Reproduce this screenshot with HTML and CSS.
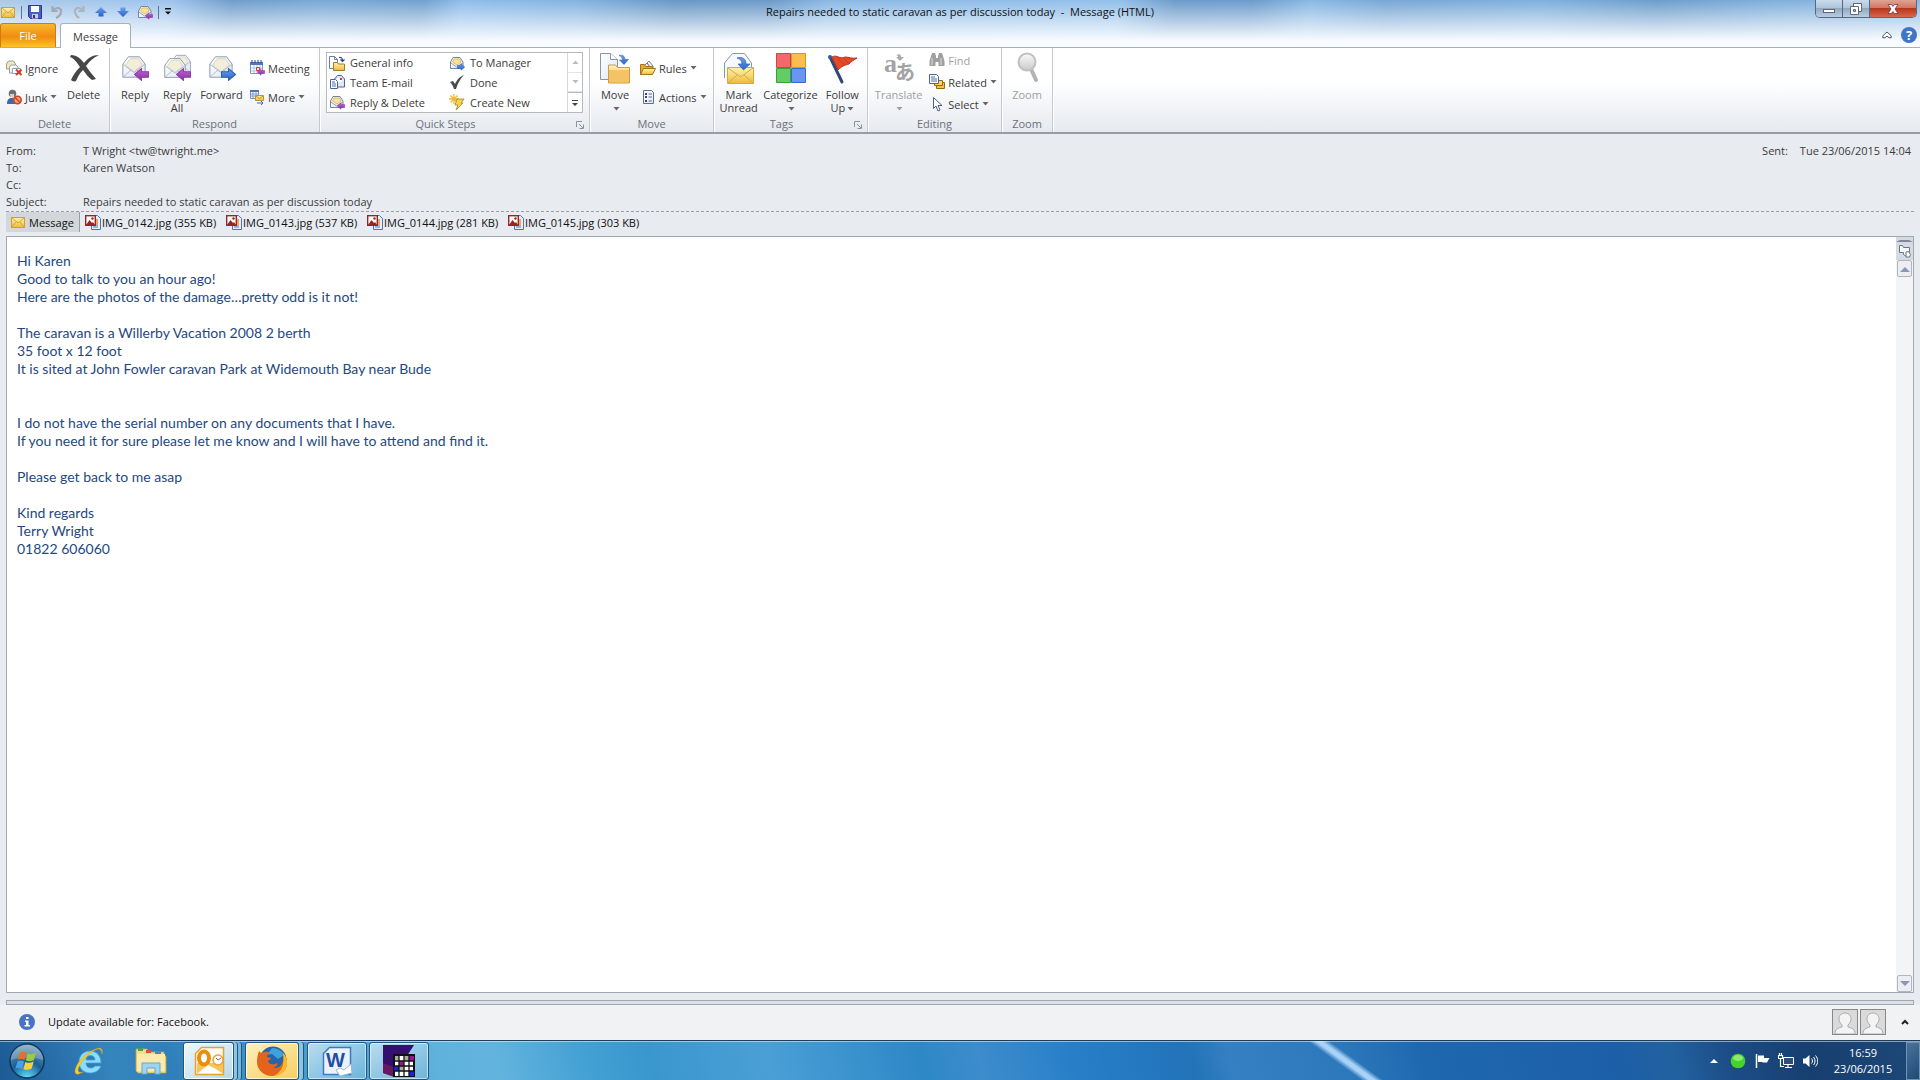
FILE: index.html
```html
<!DOCTYPE html>
<html lang="en">
<head>
    <meta charset="UTF-8">
    <meta name="viewport" content="width=device-width, initial-scale=1.0">
    <title>Repairs needed to static caravan as per discussion today - Message (HTML)</title>
    <link rel="stylesheet" href="styles.css">
</head>
<body>

    <!-- Shared icons -->
    <svg class="defs" aria-hidden="true">
        <defs>
            <linearGradient id="gold" x1="0" y1="0" x2="0" y2="1"><stop offset="0" stop-color="#fff3b0"/><stop offset="1" stop-color="#eebb3c"/></linearGradient>
            <linearGradient id="paper" x1="0" y1="0" x2="1" y2="1"><stop offset="0" stop-color="#ffffff"/><stop offset="1" stop-color="#dfe8f3"/></linearGradient>
            <linearGradient id="purple" x1="0" y1="0" x2="0" y2="1"><stop offset="0" stop-color="#c06ad0"/><stop offset="1" stop-color="#8a2ba6"/></linearGradient>
            <linearGradient id="blue" x1="0" y1="0" x2="0" y2="1"><stop offset="0" stop-color="#6ea0ee"/><stop offset="1" stop-color="#2a5fc8"/></linearGradient>
            <linearGradient id="grey" x1="0" y1="0" x2="0" y2="1"><stop offset="0" stop-color="#fafafa"/><stop offset="1" stop-color="#c9c9c9"/></linearGradient>
            <symbol id="mail" viewBox="0 0 16 16">
                <rect x="1.500" y="3.500" width="13" height="10" fill="url(#gold)" stroke="#c9a03c"/>
                <path d="M2 4l6 5 6-5M2 13l4-5M14 13l-4-5" fill="none" stroke="#d3a440"/>
            </symbol>
            <symbol id="open-mail" viewBox="0 0 28 28">
                <path d="M2 11L8 3h12l6 8v14H2z" fill="url(#paper)" stroke="#8794ab"/>
                <path d="M5 12l5-7h9l4 7-9 7z" fill="#f3eed9" stroke="#d8d4c2"/>
                <path d="M2 11l12 9 12-9M2 25l9-8M26 25l-9-8" fill="none" stroke="#a9b6ca"/>
            </symbol>
            <symbol id="arrow-left" viewBox="0 0 14 12">
                <path d="M.5 6L7 .5v3h6.500v5H7v3z" fill="url(#purple)" stroke="#8f3ea6"/>
            </symbol>
            <symbol id="arrow-right" viewBox="0 0 14 12">
                <path d="M13.500 6L7 .5v3H.5v5H7v3z" fill="url(#blue)" stroke="#3260ae"/>
            </symbol>
            <symbol id="reply" viewBox="0 0 28 28">
                <use href="#open-mail" width="26" height="26"/>
                <use href="#arrow-left" x="13" y="14" width="15" height="13"/>
            </symbol>
            <symbol id="reply-small" viewBox="0 0 16 16">
                <path d="M1.500 7L4 2.500h7L14 7v6.500H1.500z" fill="url(#paper)" stroke="#74869f"/>
                <path d="M3.500 7L5 4h5.500L12 7l-4 3z" fill="#fbe39c" stroke="#dfbb62"/>
                <path d="M2 8l5.500 4L14 8" fill="none" stroke="#8f9fb6"/>
                <use href="#arrow-left" x="8" y="8" width="8" height="8"/>
            </symbol>
            <symbol id="forward-small" viewBox="0 0 16 16">
                <path d="M1.500 7L4 2.500h7L14 7v6.500H1.500z" fill="url(#paper)" stroke="#74869f"/>
                <path d="M3.500 7L5 4h5.500L12 7l-4 3z" fill="#fbe39c" stroke="#dfbb62"/>
                <path d="M2 8l5.500 4L14 8" fill="none" stroke="#8f9fb6"/>
                <use href="#arrow-right" x="8" y="8" width="8" height="8"/>
            </symbol>
            <symbol id="move" viewBox="0 0 32 32">
                <path d="M1.500 1.500h10l7 6v20h-17z" fill="url(#paper)" stroke="#8795ad"/>
                <path d="M11.500 1.500v6h7" fill="#fff" stroke="#8795ad"/>
                <path d="M9.500 31V13h7l2 2.500h12V31z" fill="url(#gold)" stroke="#d29a3c"/>
                <path d="M10 18h20v12.500H10z" fill="#f4c367"/>
                <path d="M20 3.500c4-1 6 1 6 4h3.500L25 12.500 20.500 8h3c0-2-1-3.500-3.500-4.500z" fill="url(#blue)" stroke="#3a68b8" stroke-width=".6"/>
            </symbol>
            <symbol id="move-small" viewBox="0 0 16 16">
                <path d="M.5 1.500h5l3 3v9h-8z" fill="#fff" stroke="#6d7f9c"/>
                <path d="M5.500 1.500v3h3" fill="none" stroke="#6d7f9c"/>
                <path d="M4.500 15.500v-8h4l1 1.500h6v6.500z" fill="url(#gold)" stroke="#a67a1e"/>
                <path d="M10 2.500c2-.5 3.500.5 3.500 3M11.500 4.500l2 2 2-2" fill="none" stroke="#2f4877" stroke-width="1.200"/>
            </symbol>
            <symbol id="picture" viewBox="0 0 16 16">
                <path d="M6.500 1.500h6l3 3v11h-9z" fill="#e6eefb" stroke="#4a73b8"/>
                <path d="M8 11h5v3H8z" fill="#8db6e8"/>
                <path d="M10 5h3v6h-3z" fill="#f2a25a"/>
                <rect x=".7" y="1.700" width="9.600" height="9.600" fill="#fff" stroke="#9c2323" stroke-width="1.400"/>
                <circle cx="7.500" cy="4.500" r="1.200" fill="#9c2323"/>
                <path d="M1 11l3.500-5L7 9l1-1 2 3z" fill="#9c2323"/>
            </symbol>
            <symbol id="caret" viewBox="0 0 7 4"><path d="M.5 0h6L3.500 3.500z" fill="currentColor"/></symbol>
            <symbol id="launcher" viewBox="0 0 8 8"><path d="M.5 6V.5H6" fill="none" stroke="#8c929b"/><path d="M3 3l4 4M7.500 3.500v4h-4" fill="none" stroke="#8c929b"/></symbol>
            <symbol id="person" viewBox="0 0 24 24">
                <path d="M2 24c0-5 3-6 7-7v-2c-2-2-3-4-3-6 0-4 3-6 6-6s6 2 6 6c0 2-1 4-3 6v2c4 1 7 2 7 7z" fill="#f4f4f4" stroke="#acacac"/>
            </symbol>
        </defs>
    </svg>

    <!-- Title bar and ribbon tabs -->
    <header class="window-top">
        <div class="title-bar">
            <div class="quick-access">
                <svg class="icon" viewBox="0 0 16 16"><use href="#mail"/></svg>
                <span class="qa-line"></span>
                <button type="button" aria-label="Save"><svg class="icon" viewBox="0 0 16 16"><path d="M1.500 1.500h13v13h-11l-2-2z" fill="#4a5fc0" stroke="#2b3a8c"/><path d="M4 2h8v6H4z" fill="#fff"/><path d="M5 10h6v4.500H5z" fill="#c5cde6"/><path d="M6 11h2v3H6z" fill="#27357f"/></svg></button>
                <button type="button" aria-label="Undo"><svg class="icon" viewBox="0 0 16 16"><path d="M3.500 2v5h5M4 6.500c3-4 9-3 8 2-.5 2.500-2 4-5 5.500" fill="none" stroke="#a3a9b2" stroke-width="2.200"/></svg></button>
                <button type="button" aria-label="Redo"><svg class="icon" viewBox="0 0 16 16"><path d="M12.500 2v5h-5M12 6.500c-3-4-9-3-8 2 .5 2.500 2 4 4 5.500" fill="none" stroke="#aeb4bd" stroke-width="2.200"/></svg></button>
                <button type="button" aria-label="Previous item"><svg class="icon" viewBox="0 0 16 16"><path d="M8 3l6 6h-3.500v3.500h-5V9H2z" fill="url(#blue)"/></svg></button>
                <button type="button" aria-label="Next item"><svg class="icon" viewBox="0 0 16 16"><path d="M8 13L2 7h3.500V3.500h5V7H14z" fill="url(#blue)"/></svg></button>
                <button type="button" aria-label="Reply and delete"><svg class="icon" viewBox="0 0 16 16"><use href="#reply-small"/></svg></button>
                <span class="qa-line"></span>
                <button type="button" class="qa-more" aria-label="Customize toolbar"><svg viewBox="0 0 8 8"><path d="M1 0h6v1.500H1zM1 3.500h6l-3 3z" fill="#111"/></svg></button>
            </div>
            <h1>Repairs needed to static caravan as per discussion today&nbsp; -&nbsp; Message (HTML)</h1>
            <div class="window-buttons">
                <button type="button" class="minimize" aria-label="Minimize"><svg viewBox="0 0 14 14"><rect x="1.500" y="7.500" width="11" height="3" fill="#fff" stroke="#5d6878"/></svg></button>
                <button type="button" class="restore" aria-label="Restore"><svg viewBox="0 0 14 14"><path d="M4.500 1.500h8v8h-8z" fill="#fff" stroke="#5d6878"/><path d="M1.500 4.500h8v8h-8z" fill="#fff" stroke="#5d6878"/><path d="M4.500 7.500h2v2h-2z" fill="#b7c3d2" stroke="#5d6878"/></svg></button>
                <button type="button" class="close" aria-label="Close"><svg viewBox="0 0 14 14"><path d="M2 2.500h3.500L7 4.500l1.500-2H12L9 7l3 4.500H8.500L7 9.500l-1.500 2H2L5 7z" fill="#fff" stroke="#6b3a3a" stroke-width=".8"/></svg></button>
            </div>
        </div>
        <nav class="tabs">
            <button type="button" class="tab tab-file">File</button>
            <button type="button" class="tab tab-active">Message</button>
            <div class="tab-tools">
                <button type="button" aria-label="Minimize the ribbon"><svg viewBox="0 0 10 8"><path d="M.8 4.800L5 1l4.200 3.800v2H7L5 5 3 6.800H.8z" fill="#fff" stroke="#4c5666"/></svg></button>
                <button type="button" class="help" aria-label="Help">?</button>
            </div>
        </nav>
    </header>

    <!-- Ribbon -->
    <section class="ribbon">
        <div class="group group-delete">
            <div class="group-body">
                <div class="stack">
                    <button type="button" class="cmd"><svg class="icon" viewBox="0 0 16 16"><path d="M.5 4l2-3h5l2 3v5h-9z" fill="#f7e7a8" stroke="#94a0b1"/><path d="M3.500 7l1.500-2h5l2 2v6h-8.500z" fill="url(#paper)" stroke="#94a0b1"/><path d="M6.500 8.500h8v5h-8z" fill="#fff" stroke="#94a0b1"/><path d="M10 9.500l5.500 5.500M15.500 9.500L10 15" stroke="#d93a2b" stroke-width="2"/></svg>Ignore</button>
                    <button type="button" class="cmd"><svg class="icon" viewBox="0 0 16 16"><path d="M1 15c0-5 2-6 5-6s4 1 4 6z" fill="#3f69ad"/><circle cx="6.500" cy="4.500" r="3.800" fill="#6a6f78"/><path d="M4 5h4v3.500H4.500z" fill="#dfcdbb"/><circle cx="11.500" cy="11" r="3.700" fill="#f3a183" stroke="#d2421f" stroke-width="1.600"/><path d="M9 8.500l5 5" stroke="#d2421f" stroke-width="1.600"/></svg>Junk<svg class="caret" viewBox="0 0 7 4"><use href="#caret"/></svg></button>
                </div>
                <button type="button" class="big"><svg class="icon-big" viewBox="0 0 32 32"><path d="M3 3c6 0 10 4 13 8 4-5 8-8 15-8-6 3-9 6-13 11 3 5 7 9 10 13l-4 1c-4-3-6-6-9-10-4 4-5 7-7 11-2 1-4 0-5-1 2-5 5-9 9-13C9 11 7 7 2 5z" fill="#474747"/></svg><span>Delete</span></button>
            </div>
            <div class="group-name">Delete</div>
        </div>

        <div class="group group-respond">
            <div class="group-body">
                <button type="button" class="big"><svg class="icon-big" viewBox="0 0 28 28"><use href="#reply"/></svg><span>Reply</span></button>
                <button type="button" class="big"><svg class="icon-big" viewBox="0 0 28 28"><use href="#open-mail" x="7" y="-1" width="22" height="22"/><use href="#open-mail" y="2" width="24" height="24"/><use href="#arrow-left" x="13" y="14" width="15" height="13"/></svg><span>Reply<br>All</span></button>
                <button type="button" class="big"><svg class="icon-big" viewBox="0 0 28 28"><use href="#open-mail" width="26" height="26"/><use href="#arrow-right" x="13" y="14" width="15" height="13"/></svg><span>Forward</span></button>
                <div class="stack">
                    <button type="button" class="cmd"><svg class="icon" viewBox="0 0 16 16"><path d="M1.500 2.500h12v11h-12z" fill="#fff" stroke="#7b93c0"/><path d="M1 2h13v3H1z" fill="#4b78c4"/><path d="M3 0v3M6 0v3M9 0v3M12 0v3" stroke="#25427e"/><path d="M2 8h11M2 11h11M5 5v8M8 5v8M11 5v8" stroke="#b3c2dd"/><path d="M7.500 7.500h3v3h-3z" fill="#fff" stroke="#d33"/><use href="#arrow-left" x="8" y="8" width="8" height="8"/></svg>Meeting</button>
                    <button type="button" class="cmd"><svg class="icon" viewBox="0 0 16 16"><path d="M1.500 1.500h8v8h-8z" fill="#fff" stroke="#7b93c0"/><path d="M1 1h9v2H1z" fill="#4b78c4"/><path d="M2 5h8M2 7h8M4 3v6M7 3v6" stroke="#7f9bcb"/><path d="M6.500 6.500h8v5h-8z" fill="url(#gold)" stroke="#bd922f"/><path d="M7 7l3.500 2.500L14 7" fill="none" stroke="#bd922f"/><path d="M8 14h6M12 12l2 2-2 2" fill="none" stroke="#356ac6"/></svg>More<svg class="caret" viewBox="0 0 7 4"><use href="#caret"/></svg></button>
                </div>
            </div>
            <div class="group-name">Respond</div>
        </div>

        <div class="group group-steps">
            <div class="group-body">
                <div class="gallery">
                    <div class="gallery-items">
                        <button type="button" class="cmd"><svg class="icon" viewBox="0 0 16 16"><use href="#move-small"/></svg>General info</button>
                        <button type="button" class="cmd"><svg class="icon" viewBox="0 0 16 16"><use href="#forward-small"/></svg>To Manager</button>
                        <button type="button" class="cmd"><svg class="icon" viewBox="0 0 16 16"><path d="M5.500 5l3-3.500h4l3 3.500v8h-10z" fill="#dfe8f5" stroke="#4b6593"/><path d="M8 4h5v4H8z" fill="#fff"/><path d="M11 4h2v2h-2z" fill="#d33"/><path d="M1.500 5.500h5l2 2v7h-7z" fill="#fff" stroke="#4b6593"/><path d="M3 8h3M3 10h4M3 12h4" stroke="#4472b8"/></svg>Team E-mail</button>
                        <button type="button" class="cmd"><svg class="icon" viewBox="0 0 16 16"><path d="M1 8l3-1 2 3c2-4 4-7 9-9-4 4-6 8-8 14H5C4 12 3 10 1 8z" fill="#4a4a4a"/></svg>Done</button>
                        <button type="button" class="cmd"><svg class="icon" viewBox="0 0 16 16"><use href="#reply-small"/></svg>Reply &amp; Delete</button>
                        <button type="button" class="cmd"><svg class="icon" viewBox="0 0 16 16"><path d="M5 0v10M0 5h10M1.500 1.500l7 7M8.500 1.500l-7 7" stroke="#eeb92e" stroke-width="1.300"/><path d="M8 5h7l-3 4h2l-7 7 2-5H6z" fill="#f8d44b" stroke="#9a7424" stroke-width=".7"/></svg>Create New</button>
                    </div>
                    <div class="gallery-scroll">
                        <button type="button" disabled aria-label="Scroll up"><svg class="caret flip" viewBox="0 0 7 4"><use href="#caret"/></svg></button>
                        <button type="button" disabled aria-label="Scroll down"><svg class="caret" viewBox="0 0 7 4"><use href="#caret"/></svg></button>
                        <button type="button" aria-label="More quick steps"><svg viewBox="0 0 8 8"><path d="M1 1h6v1H1zM1 4h6L4 7z" fill="#444"/></svg></button>
                    </div>
                </div>
            </div>
            <div class="group-name with-launcher">Quick Steps<svg class="launcher" viewBox="0 0 8 8"><use href="#launcher"/></svg></div>
        </div>

        <div class="group group-move">
            <div class="group-body">
                <button type="button" class="big"><svg class="icon-big" viewBox="0 0 32 32"><use href="#move"/></svg><span>Move<br><svg class="caret" viewBox="0 0 7 4"><use href="#caret"/></svg></span></button>
                <div class="stack">
                    <button type="button" class="cmd"><svg class="icon" viewBox="0 0 16 16"><path d="M4 6l5-5 4 5v5H4z" fill="#eef3fb" stroke="#6f81a4"/><path d="M7 3l3 4" stroke="#c0392b"/><path d="M.5 4.500h4l1 2h7v8h-12z" fill="#e2a838" stroke="#a67315"/><path d="M.5 14.500l3-6H15.500l-3 6z" fill="url(#gold)" stroke="#a67315"/></svg>Rules<svg class="caret" viewBox="0 0 7 4"><use href="#caret"/></svg></button>
                    <button type="button" class="cmd"><svg class="icon" viewBox="0 0 16 16"><path d="M3.500 1.500h8l2 2v11h-10z" fill="url(#paper)" stroke="#5f6f8c"/><path d="M5 4h2v2H5zM5 7h2v2H5zM5 11h2v2H5z" fill="#3b4a68"/><path d="M8.500 5H12M8.500 8H12M8.500 12H12" stroke="#5f6f8c"/></svg>Actions<svg class="caret" viewBox="0 0 7 4"><use href="#caret"/></svg></button>
                </div>
            </div>
            <div class="group-name">Move</div>
        </div>

        <div class="group group-tags">
            <div class="group-body">
                <button type="button" class="big"><svg class="icon-big" viewBox="0 0 32 32"><path d="M1.500 26V11l8-9.500h12l7 9.500v6" fill="#f6f9fd" stroke="#8b98ab"/><path d="M4.500 15.500h26v16h-26z" fill="url(#gold)" stroke="#d9a93a"/><path d="M5 16l12.500 9L30 16M5 31l9-8M30 31l-9-8" fill="none" stroke="#d9a93a"/><path d="M14 6c6-1.500 9 1 9 6h4l-6.500 6L15 12h4c0-3-1.500-5-5-6z" fill="url(#blue)" stroke="#3260ae" stroke-width=".7"/></svg><span>Mark<br>Unread</span></button>
                <button type="button" class="big"><svg class="icon-big" viewBox="0 0 32 32"><path d="M1.500 1.500h14v14h-14z" fill="#f4686a" stroke="#d14145"/><path d="M16.500 1.500h14v14h-14z" fill="#fbbd4d" stroke="#d99422"/><path d="M1.500 16.500h14v14h-14z" fill="#63cd63" stroke="#36a03b"/><path d="M16.500 16.500h14v14h-14z" fill="#6a95f3" stroke="#3d66cc"/></svg><span>Categorize<br><svg class="caret" viewBox="0 0 7 4"><use href="#caret"/></svg></span></button>
                <button type="button" class="big"><svg class="icon-big" viewBox="0 0 32 32"><path d="M4 5l12 25" stroke="#2f4877" stroke-width="3" stroke-linecap="round"/><circle cx="4" cy="5" r="2" fill="#3c5a94"/><path d="M6 5c5-3 8 3 13 0 4 0 7 2 12 1-3 2-7 4-8 6-4 1-7 2-11 6z" fill="#e5492a" stroke="#b92d18"/><path d="M12 6l6 7M18 6l4 5" stroke="#c93b20"/></svg><span>Follow<br>Up<svg class="caret" viewBox="0 0 7 4"><use href="#caret"/></svg></span></button>
            </div>
            <div class="group-name with-launcher">Tags<svg class="launcher" viewBox="0 0 8 8"><use href="#launcher"/></svg></div>
        </div>

        <div class="group group-editing">
            <div class="group-body">
                <button type="button" class="big" disabled><svg class="icon-big" viewBox="0 0 32 32"><text x="1" y="20" class="glyph-a">a</text><text x="12" y="28" class="glyph-b">あ</text><path d="M12 4c4-3 6-2 6 1h3l-4 4-4-4h2c0-2-1-2-3-1z" fill="#aaa"/></svg><span>Translate<br><svg class="caret" viewBox="0 0 7 4"><use href="#caret"/></svg></span></button>
                <div class="stack stack-three">
                    <button type="button" class="cmd" disabled><svg class="icon" viewBox="0 0 16 16"><path d="M2 4l1-3h3l1 3v2h2V4l1-3h3l1 3 1.500 5v5H9.500v-4h-3v4H.5V9z" fill="#a0a0a0"/><path d="M3 6v7M12 6v7" stroke="#ddd"/></svg>Find</button>
                    <button type="button" class="cmd"><svg class="icon" viewBox="0 0 16 16"><path d="M7.500 8.500h8v6h-8z" fill="#f4c23c" stroke="#8f6b17"/><path d="M5.500 6.500h8v5h-8z" fill="#f8d868" stroke="#8f6b17"/><path d="M.5.500h7l2 2v7h-9z" fill="#fff" stroke="#4b6593"/><path d="M2 3h4M2 5h6M2 7h6" stroke="#4472b8"/></svg>Related<svg class="caret" viewBox="0 0 7 4"><use href="#caret"/></svg></button>
                    <button type="button" class="cmd"><svg class="icon" viewBox="0 0 16 16"><path d="M4.500 1.500v11l2.500-2.500 2 5 2-1-2-4.500h4z" fill="#fff" stroke="#4a5f86"/></svg>Select<svg class="caret" viewBox="0 0 7 4"><use href="#caret"/></svg></button>
                </div>
            </div>
            <div class="group-name">Editing</div>
        </div>

        <div class="group group-zoom">
            <div class="group-body">
                <button type="button" class="big" disabled><svg class="icon-big" viewBox="0 0 32 32"><path d="M20 17l5 11" stroke="#b3b3b3" stroke-width="4" stroke-linecap="round"/><circle cx="16" cy="10" r="8.500" fill="url(#grey)" stroke="#c0c0c0" stroke-width="2"/></svg><span>Zoom</span></button>
            </div>
            <div class="group-name">Zoom</div>
        </div>
    </section>

    <!-- Message header -->
    <section class="mail-header">
        <dl class="fields">
            <dt>From:</dt><dd>T Wright &lt;tw@twright.me&gt;</dd>
            <dt>To:</dt><dd>Karen Watson</dd>
            <dt>Cc:</dt><dd></dd>
            <dt>Subject:</dt><dd>Repairs needed to static caravan as per discussion today</dd>
        </dl>
        <p class="sent"><span>Sent:</span><time datetime="2015-06-23T14:04">Tue 23/06/2015 14:04</time></p>
    </section>

    <div class="attachments">
        <button type="button" class="message-tab"><svg class="icon" viewBox="0 0 16 16"><use href="#mail"/></svg>Message</button>
        <a href="#"><svg class="icon" viewBox="0 0 16 16"><use href="#picture"/></svg>IMG_0142.jpg (355 KB)</a>
        <a href="#"><svg class="icon" viewBox="0 0 16 16"><use href="#picture"/></svg>IMG_0143.jpg (537 KB)</a>
        <a href="#"><svg class="icon" viewBox="0 0 16 16"><use href="#picture"/></svg>IMG_0144.jpg (281 KB)</a>
        <a href="#"><svg class="icon" viewBox="0 0 16 16"><use href="#picture"/></svg>IMG_0145.jpg (303 KB)</a>
    </div>

    <!-- Message body -->
    <main class="message">
        <div class="message-text">
            <p>Hi Karen<br>Good to talk to you an hour ago!<br>Here are the photos of the damage…pretty odd is it not!</p>
            <p>The caravan is a Willerby Vacation 2008 2 berth<br>35 foot x 12 foot<br>It is sited at John Fowler caravan Park at Widemouth Bay near Bude</p>
            <p class="spaced">I do not have the serial number on any documents that I have.<br>If you need it for sure please let me know and I will have to attend and find it.</p>
            <p>Please get back to me asap</p>
            <p>Kind regards<br>Terry Wright<br>01822 606060</p>
        </div>
        <div class="scrollbar">
            <span class="split"></span>
            <button type="button" class="ruler" aria-label="Show ruler"><svg viewBox="0 0 14 14"><path d="M1.500 1.500h3l1 2h6v6h-3v3l-3-2v-2h-4z" fill="#f5f6f8" stroke="#6d7684"/><path d="M8 8l2.500-.5 2 3-1 2.500H8z" fill="#fff" stroke="#6d7684"/></svg></button>
            <button type="button" class="scroll-end" aria-label="Scroll up"><svg class="flip" viewBox="0 0 10 6"><path d="M0 0h10L5 5z"/></svg></button>
            <span class="track"></span>
            <button type="button" class="scroll-end" aria-label="Scroll down"><svg viewBox="0 0 10 6"><path d="M0 0h10L5 5z"/></svg></button>
        </div>
    </main>
    <div class="splitter"></div>

    <!-- People pane -->
    <footer class="people-pane">
        <svg class="info" viewBox="0 0 16 16"><circle cx="8" cy="8" r="8" fill="#4a73c4"/><path d="M7 3h2.500v2H7zM6 6.500h3.500V11H11v1.500H5.500V11H7V8H6z" fill="#fff"/></svg>
        <p>Update available for: Facebook.</p>
        <svg class="person" viewBox="0 0 24 24"><use href="#person"/></svg>
        <svg class="person" viewBox="0 0 24 24"><use href="#person"/></svg>
        <button type="button" aria-label="Expand people pane"><svg viewBox="0 0 8 6"><path d="M1 5l3-3 3 3" fill="none" stroke="#222" stroke-width="2"/></svg></button>
    </footer>

    <!-- Taskbar -->
    <nav class="taskbar">
        <button type="button" class="start" aria-label="Start"><svg viewBox="0 0 36 36">
            <defs><radialGradient id="orb" cx=".5" cy="1" r="1"><stop offset="0" stop-color="#5fe0ff"/><stop offset=".5" stop-color="#1c5f95"/><stop offset="1" stop-color="#7da3c2"/></radialGradient></defs>
            <circle cx="18" cy="18" r="17" fill="url(#orb)" stroke="#0c3558" stroke-width="1.500"/>
            <path d="M1.500 17C2 8 9 1.500 18 1.500S34 8 34.500 17c-10-3-23-3-33 0z" fill="#fff" opacity=".22"/>
            <path d="M11 9.500c2-1 4-1 6.500.3L15.500 17c-2.500-1.200-4.500-1.200-6.600-.3z" fill="#ef6a32"/>
            <path d="M18.700 10.400c2.500 1.200 5 1.200 8.300-.6L25 17c-3 1.600-5.500 1.500-8.200.3z" fill="#9ccc3c"/>
            <path d="M8.500 18.200c2.500-1 4.500-.8 6.600.3l-2 7.200c-2.300-1.200-4.500-1.200-6.600-.4z" fill="#4aa0e6"/>
            <path d="M16.400 18.900c2.600 1.200 5 1.200 8.300-.5l-2 7.200c-3 1.600-5.500 1.600-8.300.4z" fill="#fbcf3c"/>
        </svg></button>
        <button type="button" class="pinned" aria-label="Internet Explorer"><svg viewBox="0 0 32 32">
            <path d="M17 6c7 0 11 5 11 12H13c0 3 2 5 5 5 2 0 3-1 4-2h6c-2 5-6 7-11 7C10 28 6 23 6 17S10 6 17 6zm-4 9h9c0-3-2-4.500-4.500-4.500S13 12 13 15z" fill="#8fdcfa" stroke="#3d9fd6" stroke-width=".8"/>
            <path d="M29 9c1-5-1-7-6-5C13 7 3 18 2 26c0 4 3 4 8 1-3 1-5 0-5-2 1-6 9-16 17-20 4-2 7-1 7 4z" fill="#f6d02f" stroke="#d3a416" stroke-width=".5"/>
        </svg></button>
        <button type="button" class="pinned" aria-label="Explorer"><svg viewBox="0 0 32 32">
            <path d="M1 26V4h11l2 3h15v4h2v17H3z" fill="#f3dd8f" stroke="#c7a13e" stroke-width=".8"/>
            <path d="M3 3h5v3H3z" fill="#3fa64b"/><path d="M11 5h5v3h-5z" fill="#d6553b"/><path d="M20 7h6v3h-6z" fill="#3f89d0"/>
            <path d="M2 9h28v17H2z" fill="#faeaae"/>
            <path d="M7 29V18h18v11h-5v-6h-8v6z" fill="#9fd4f1" stroke="#5ea9d4"/>
        </svg></button>
        <button type="button" class="task stacked" aria-label="Outlook"><svg viewBox="0 0 32 32">
            <path d="M8.500 2.500h22v27h-28v-21z" fill="#fffaf0" stroke="#e6a033" stroke-width="1.500"/>
            <path d="M4 28V18h26v10z" fill="#f8c55b"/><path d="M5 28l10-8 6 3 8 5z" fill="#fff"/>
            <ellipse cx="11" cy="13" rx="5" ry="6.500" fill="#fff" stroke="#e88f0c" stroke-width="4"/>
            <circle cx="25" cy="15" r="5" fill="#fff" stroke="#e8a13c" stroke-width="1.500"/><path d="M23 13l2 2 3-2" fill="none" stroke="#8d6c3a"/>
        </svg></button>
        <button type="button" class="task stacked task-hot" aria-label="Firefox"><svg viewBox="0 0 32 32">
            <circle cx="17" cy="15" r="13.500" fill="#2765a8"/><path d="M16 3c6 0 10 3 12 7l-6 4-6-5-5 1z" fill="#3fa2dc"/>
            <path d="M3 6c1 1 2 2 3 2 3-2 6-1 8 0-2 1-3 2-3 4l4 1c0 2-3 2-3 3 1 4 6 4 9 2 2 1-1 4-4 5 8 1 12-6 10-15 3 3 4 7 4 10 0 8-7 13-15 13S1 25 1 17C1 12 2 9 3 6z" fill="#e5641c"/>
            <path d="M27 8c3 3 4 6 4 10 0 7-6 13-14 13 8-3 12-10 10-23z" fill="#fbb829"/>
        </svg></button>
        <button type="button" class="task" aria-label="Word"><svg viewBox="0 0 32 32">
            <path d="M8.500 2.500h21v27h-27v-21z" fill="#eaf3fc" stroke="#3f78bd" stroke-width="1.500"/>
            <text x="5" y="22" class="glyph-w">W</text>
            <path d="M15 25l4-2 4 2 7-6 1 9-12 3z" fill="#fff" stroke="#9db7d4"/>
        </svg></button>
        <button type="button" class="task" aria-label="Photo viewer"><svg viewBox="0 0 32 32">
            <path d="M0 0h31l-7 11H11v20L0 28z" fill="#34106e"/><path d="M0 18l11 4v10L0 28z" fill="#6d1565"/>
            <path d="M11 10h20v22H11z" fill="#fff" stroke="#111" stroke-width="2"/>
            <path d="M12 11h4v4h-4zM21 11h5v5h-5zM16 21h5v5h-5z" fill="#aaa"/><path d="M26 11h5v5h-5zM16 16h5v5h-5z" fill="#9b148d"/><path d="M11 21h5v5h-5zM26 26h5v5h-5z" fill="#1925d0"/>
            <path d="M16 10v22M21 10v22M26 10v22M11 16h20M11 21h20M11 26h20" stroke="#111" stroke-width="1.300"/>
        </svg></button>
        <div class="tray">
            <svg viewBox="0 0 16 16"><path d="M4 10h8L8 6z" fill="#fff"/></svg>
            <svg viewBox="0 0 16 16"><circle cx="8" cy="8" r="7.300" fill="#46d42c"/><ellipse cx="8" cy="5" rx="5" ry="3" fill="#a9f58c" opacity=".7"/></svg>
            <svg viewBox="0 0 16 16"><path d="M2.500 1v14" stroke="#fff" stroke-width="1.500"/><path d="M4 2.500h6V5h5.500L13 9.500H8.500V9H4z" fill="#fff"/></svg>
            <svg viewBox="0 0 16 16"><path d="M5.500 4.500h10v7h-10z" fill="#2c4f78" stroke="#fff"/><path d="M10 12v3M7 14.500h7M.5 2.500h4v3h-4zM1.500 0v2M3.500 0v2M2.500 6v7.500H6" fill="none" stroke="#fff" stroke-width="1.200"/></svg>
            <svg viewBox="0 0 16 16"><path d="M1 5.500h2.500L7.500 2v12l-4-3.500H1z" fill="#fff"/><path d="M9.500 5.500c1.300 1.500 1.300 3.500 0 5M11.500 4c2 2.500 2 5.500 0 8M13.500 2.500c3 3.500 3 7.500 0 11" fill="none" stroke="#fff"/></svg>
            <p class="clock">16:59<br>23/06/2015</p>
        </div>
        <button type="button" class="show-desktop" aria-label="Show desktop"></button>
    </nav>

</body>
</html>
```
FILE: styles.css
```css
* {
    box-sizing: border-box;
}

body {
    margin: 0;
    height: 100vh;
    display: flex;
    flex-direction: column;
    font-family: "Open Sans", "Noto Sans", sans-serif;
    font-size: 11px;
    line-height: 13px;
    color: #3b3b3b;
    background-color: #e8ebf0;
    overflow: hidden;
}

button {
    margin: 0;
    padding: 0;
    border: 0;
    background: none;
    font: inherit;
    color: inherit;
}

p, h1, dl, dd {
    margin: 0;
}

svg {
    display: block;
    flex: none;
}

.defs {
    position: absolute;
    width: 0;
    height: 0;
}

.icon {
    width: 16px;
    height: 16px;
}

.icon-big {
    width: 32px;
    height: 32px;
    overflow: visible;
}

.caret {
    width: 7px;
    height: 4px;
    color: #666;
}

.flip {
    transform: rotate(180deg);
}

/* Title bar */
.window-top {
    background:
        linear-gradient(to bottom, rgba(255, 255, 255, 0) 0, rgba(255, 255, 255, 0.5) 45%, #f8fbff 85%),
        linear-gradient(100deg, #a9c9ea 0, #9cc3ec 9%, #6f9dcb 12%, #79a8d6 17%, #71a0cf 22%, #8fbdea 24%, #83b2e0 30%, #6897c6 35%, #6b9ac9 40%, #8bb8e4 43%, #93c0ea 58%, #6c9aca 61%, #6c9bcb 65%, #89b8e4 68%, #77a6d5 72%, #80b0de 80%, #6d9dcc 86%, #80afdb 92%, #8db9e2 100%);
}

.title-bar {
    display: grid;
    grid-template-columns: 1fr auto 1fr;
    height: 23px;
}

.quick-access {
    display: flex;
    align-items: center;
    gap: 6px;
}

.quick-access .qa-line {
    width: 1px;
    height: 13px;
    margin: 0 -1px;
    background-color: #62738a;
}

.qa-more svg {
    width: 8px;
    height: 8px;
}

.title-bar h1 {
    font-size: 11px;
    font-weight: normal;
    line-height: 24px;
    color: #111;
}

.window-buttons {
    display: flex;
    justify-self: end;
    height: 18px;
    margin-right: 3px;
    border: 1px solid #56687f;
    border-top: 0;
    border-radius: 0 0 5px 5px;
    overflow: hidden;
}

.window-buttons button {
    display: flex;
    align-items: center;
    justify-content: center;
    width: 27px;
    background: linear-gradient(#c9dbec 0, #b0c4d9 48%, #91a8c1 50%, #b9cee2 100%);
    border-right: 1px solid #56687f;
}

.window-buttons svg {
    width: 14px;
    height: 14px;
}

.window-buttons .close {
    width: 46px;
    border-right: 0;
    background: linear-gradient(#e0a393 0, #cf7563 48%, #b8351e 50%, #d5694c 100%);
}

/* Ribbon tabs */
.tabs {
    display: flex;
    height: 25px;
    border-bottom: 1px solid #a7b0bd;
}

.tab {
    height: 24px;
    border-radius: 3px 3px 0 0;
}

.tab-file {
    width: 56px;
    color: #fff;
    background: linear-gradient(#f8b92e, #f08d0e 55%, #ffc12a);
    border: 1px solid #d07a10;
    border-bottom: 0;
}

.tab-active {
    width: 71px;
    height: 25px;
    margin-left: 4px;
    background-color: #fff;
    border: 1px solid #a7b0bd;
    border-bottom: 0;
}

.tab-tools {
    display: flex;
    align-items: center;
    gap: 9px;
    margin-left: auto;
    padding-right: 3px;
}

.tab-tools svg {
    width: 10px;
    height: 8px;
}

.help {
    width: 16px;
    height: 16px;
    border-radius: 50%;
    background-color: #3f74c9;
    color: #fff;
    font-size: 13px;
    font-weight: bold;
    line-height: 16px;
}

/* Ribbon */
.ribbon {
    display: flex;
    height: 86px;
    background: linear-gradient(#fff 40%, #e6e9ee);
    border-bottom: 2px solid #989da5;
}

.group {
    display: flex;
    flex-direction: column;
    border-right: 1px solid #c6cad0;
    box-shadow: 1px 0 0 #fff;
}

.group-body {
    flex: 1;
    display: flex;
    padding: 4px 6px 0;
}

.group-name {
    position: relative;
    height: 15px;
    color: #6a717c;
    text-align: center;
}

.with-launcher {
    padding-right: 18px;
}

.launcher {
    position: absolute;
    right: 5px;
    bottom: 3px;
    width: 8px;
    height: 8px;
}

.group-delete { width: 110px; }
.group-respond { width: 210px; }
.group-steps { width: 270px; }
.group-move { width: 124px; }
.group-tags { width: 154px; }
.group-editing { width: 134px; }
.group-zoom { width: 51px; }

.stack {
    display: flex;
    flex-direction: column;
    gap: 13px;
    padding-top: 8px;
}

.stack-three {
    gap: 6px;
    padding-top: 0;
}

.cmd {
    display: flex;
    align-items: center;
    gap: 3px;
    height: 16px;
    white-space: nowrap;
}

.big {
    flex: 1;
    display: flex;
    flex-direction: column;
    align-items: center;
    gap: 4px;
    white-space: nowrap;
}

.big .caret {
    display: inline-block;
    margin-left: 2px;
    vertical-align: middle;
}

.big:disabled,
.cmd:disabled,
.big:disabled .caret {
    color: #a0a0a0;
}

.group-delete .group-body {
    padding-right: 0;
}

.group-respond .group-body {
    display: grid;
    grid-template-columns: 42px 42px 47px auto;
    padding: 4px 0 0 4px;
}

.group-respond .big .icon-big {
    width: 28px;
}

.group-respond .stack {
    padding-left: 4px;
}

.group-move .big {
    flex: none;
    width: 38px;
    margin-right: 6px;
}

.group-tags .group-body,
.group-zoom .group-body {
    padding-left: 0;
    padding-right: 0;
}

.group-editing .group-body {
    padding-left: 0;
    padding-right: 4px;
}

.glyph-a {
    font-family: "Liberation Serif", serif;
    font-size: 26px;
    font-weight: bold;
    fill: #a3a3a3;
}

.glyph-b {
    font-family: "Noto Sans CJK JP", sans-serif;
    font-size: 20px;
    font-weight: bold;
    fill: #a3a3a3;
}

/* Quick steps gallery */
.gallery {
    flex: 1;
    display: flex;
    height: 61px;
    border: 1px solid #b6bac0;
    background-color: #fff;
}

.gallery-items {
    flex: 1;
    display: grid;
    grid-template-columns: 120px 1fr;
    align-items: center;
    padding-left: 2px;
}

.gallery-items .cmd {
    gap: 5px;
}

.gallery-scroll {
    display: grid;
    grid-template-rows: 1fr 1fr 1fr;
    width: 15px;
    border-left: 1px solid #d5d8dc;
}

.gallery-scroll button {
    display: flex;
    align-items: center;
    justify-content: center;
    border-bottom: 1px solid #e2e4e8;
}

.gallery-scroll button:last-child {
    border-top: 1px solid #b6bac0;
    border-bottom: 0;
}

.gallery-scroll button:last-child svg {
    width: 8px;
    height: 8px;
}

.gallery-scroll .caret {
    color: #bbb;
}

/* Message header */
.mail-header {
    display: flex;
    justify-content: space-between;
    margin: 0 6px;
    padding: 8px 3px 1px 0;
    border-bottom: 1px dashed #9a9fa7;
}

.fields {
    display: grid;
    grid-template-columns: 77px auto;
    grid-auto-rows: 17px;
    line-height: 17px;
}

.sent {
    display: flex;
    gap: 12px;
    line-height: 17px;
}

.attachments {
    display: flex;
    height: 24px;
    margin-left: 6px;
    color: #111;
}

.attachments a,
.message-tab {
    display: flex;
    align-items: center;
    gap: 1px;
    height: 20px;
    color: #111;
    text-decoration: none;
}

.attachments a {
    width: 141px;
}

.message-tab {
    width: 74px;
    margin-right: 5px;
    padding-left: 4px;
    gap: 3px;
    background-color: #d3d7da;
    border-right: 1px solid #9a9fa7;
}

/* Message body */
.message {
    flex: 1;
    display: flex;
    margin: 0 6px;
    border: 1px solid #a0a8b4;
    background-color: #fff;
}

.message-text {
    flex: 1;
    padding: 15px 10px;
    font-family: Lato, sans-serif;
    font-size: 14px;
    line-height: 18px;
    color: #1f497d;
}

.message-text p {
    margin-bottom: 18px;
}

.message-text .spaced {
    margin-top: 36px;
}

.scrollbar {
    display: flex;
    flex-direction: column;
    width: 17px;
    background-color: #f3f4f6;
}

.split {
    height: 5px;
    background-color: #d5dbe2;
    border-bottom: 2px solid #7e8896;
    border-left: 4px solid #d5dbe2;
    border-right: 4px solid #d5dbe2;
}

.ruler {
    display: flex;
    align-items: center;
    justify-content: center;
    height: 18px;
    background-color: #d5dbe2;
}

.ruler svg {
    width: 14px;
    height: 14px;
}

.scroll-end {
    display: flex;
    align-items: center;
    justify-content: center;
    height: 17px;
    margin: 0 1px;
    border: 1px solid #b1b6be;
    border-radius: 2px;
    background-color: #eceef1;
}

.scroll-end svg {
    width: 10px;
    height: 6px;
    fill: #8a97b8;
}

.track {
    flex: 1;
}

.splitter {
    height: 5px;
    margin: 7px 6px 0;
    border: 1px solid #a0a8b4;
    background-color: #dde1e7;
}

/* People pane */
.people-pane {
    display: flex;
    align-items: center;
    gap: 2px;
    height: 35px;
    padding: 0 11px 2px 19px;
    background-color: #f1f2f4;
    color: #111;
}

.people-pane p {
    flex: 1;
    padding-left: 11px;
}

.info {
    width: 16px;
    height: 16px;
}

.person {
    width: 26px;
    height: 26px;
    border: 1px solid #888;
    background-color: #dadada;
}

.people-pane button {
    margin-left: 13px;
}

.people-pane button svg {
    width: 8px;
    height: 6px;
}

/* Taskbar */
.taskbar {
    display: flex;
    align-items: center;
    height: 40px;
    border-top: 1px solid #1b3e5e;
    box-shadow: inset 0 1px 0 rgba(255, 255, 255, 0.5);
    background:
        linear-gradient(36deg, rgba(169, 210, 247, 0) 42%, #a9d2f7 48%, #a9d2f7 52%, rgba(169, 210, 247, 0) 58%) 71% 0 / 80px 40px no-repeat,
        linear-gradient(75deg, #1c5a94 0, #2c75b0 4%, #3585bd 6%, #2f80ba 9%, #4095c9 14%, #5fb2dc 23%, #62b4dd 26%, #419fd3 31%, #3a97ce 34%, #4a9fd6 40%, #2e88c6 48%, #3d8ccc 51%, #277fc8 56%, #2273b8 62%, #3480c2 64%, #2c78bb 70%, #1e68b0 74%, #1c5fa8 84%, #22619f 87%, #1c4c86 90%, #173f6f 94%, #1d4877 100%);
}

.start {
    width: 58px;
    padding-left: 9px;
}

.start svg {
    width: 36px;
    height: 36px;
}

.pinned {
    display: flex;
    justify-content: center;
    width: 62px;
}

.taskbar .pinned svg,
.task svg {
    width: 32px;
    height: 32px;
}

.task {
    display: flex;
    align-items: center;
    justify-content: center;
    width: 60px;
    height: 38px;
    margin-right: 2px;
    border: 1px solid #23557f;
    border-radius: 3px;
    background: linear-gradient(150deg, #b9dcf0, #6db5db);
    box-shadow: inset 0 0 0 1px rgba(255, 255, 255, 0.55);
}

.pinned + .task {
    margin-left: 1px;
}

.stacked {
    width: 51px;
    margin-right: 11px;
    background: linear-gradient(150deg, #eff7fb, #b4dbee);
    box-shadow: inset 0 0 0 1px #fff, 3px 0 0 #8ac6e4, 4px 0 0 #23557f, 7px 0 0 #76b9de, 8px 0 0 #23557f;
}

.task-hot {
    width: 54px;
    margin-right: 8px;
    background: linear-gradient(150deg, #fdf1c0, #f6cf5c);
    box-shadow: inset 0 0 0 1px #fff8d8, 4px 0 0 #8ac6e4, 5px 0 0 #23557f;
}

.glyph-w {
    font-family: "Liberation Sans", sans-serif;
    font-size: 20px;
    font-weight: bold;
    fill: #1f4fa3;
}

.tray {
    display: flex;
    align-items: center;
    gap: 8px;
    margin-left: auto;
    color: #fff;
}

.tray svg {
    width: 16px;
    height: 16px;
}

.clock {
    width: 74px;
    font-size: 11px;
    line-height: 16px;
    text-align: center;
}

.show-desktop {
    width: 14px;
    height: 38px;
    margin-left: 6px;
    border: 1px solid #6f93b5;
    background: linear-gradient(135deg, #4b7299, #1f4a77);
}
```
